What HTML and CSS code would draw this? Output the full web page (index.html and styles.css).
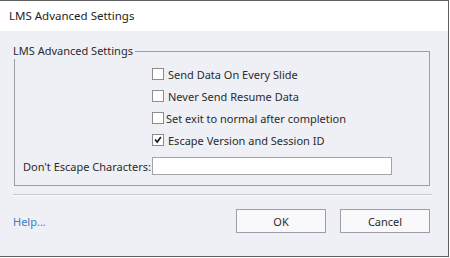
FILE: index.html
```html
<!DOCTYPE html>
<html lang="en">
<head>
  <meta charset="UTF-8">
  <title>LMS Advanced Settings</title>
  <link rel="stylesheet" href="styles.css">
</head>
<body>

  <div class="window">
    <!-- Title bar -->
    <div class="titlebar">LMS Advanced Settings</div>

    <div class="content">
      <fieldset class="group">
        <legend>LMS Advanced Settings</legend>

        <div class="options">
          <label class="option">
            <span class="check"></span>
            <span>Send Data On Every Slide</span>
          </label>
          <label class="option">
            <span class="check"></span>
            <span>Never Send Resume Data</span>
          </label>
          <label class="option tight">
            <span class="check"></span>
            <span>Set exit to normal after completion</span>
          </label>
          <label class="option">
            <span class="check checked">
              <svg width="12" height="12" viewBox="0 0 12 12"><path d="M2.5 5.5 L5 8.5 L9.5 2.5" fill="none" stroke="#1a1a1a" stroke-width="2"/></svg>
            </span>
            <span>Escape Version and Session ID</span>
          </label>
        </div>

        <div class="field-row">
          <span class="field-label">Don't Escape Characters:</span>
          <input type="text" class="field-input">
        </div>
      </fieldset>

      <div class="separator"></div>

      <!-- Footer -->
      <div class="footer">
        <a href="javascript:void(0)" class="help">Help...</a>
        <div class="buttons">
          <button class="btn">OK</button>
          <button class="btn">Cancel</button>
        </div>
      </div>
    </div>
  </div>

</body>
</html>
```

FILE: styles.css
```css
/* General Styles */
body {
  margin: 0;
  padding: 0;
  background: #ffffff;
  font-family: 'Noto Sans', 'DejaVu Sans', sans-serif;
  font-size: 11px;
  color: #2b2b2b;
}

/* Window frame */
.window {
  width: 449px;
  height: 257px;
  box-sizing: border-box;
  border-top: 1px solid #5f5f5f;
  border-right: 1px solid #5f5f5f;
  border-bottom: 1px solid #5f5f5f;
  background: #eff0f5;
  display: flex;
  flex-direction: column;
}

.titlebar {
  height: 30px;
  line-height: 30px;
  padding-left: 9px;
  background: #ffffff;
  font-size: 11.5px;
  color: #1e1e1e;
}

.content {
  padding: 12px 0 0 13px;
}

/* Group box */
.group {
  margin: 0 0 0 1px;
  padding: 4px 0 0 0;
  width: 416px;
  height: 143px;
  box-sizing: border-box;
  border: 1px solid #9c9ca4;
  min-width: 0;
}

.group legend {
  margin-left: -2px;
  padding: 0 2px 0 0;
  line-height: 16px;
  color: #2b2b2b;
}

.options {
  display: flex;
  flex-direction: column;
  padding-left: 137px;
}

.option {
  height: 22px;
  display: flex;
  align-items: center;
  gap: 4px;
}

.option.tight {
  gap: 2px;
}

.check {
  width: 12px;
  height: 12px;
  box-sizing: border-box;
  border: 1px solid #8c8c8c;
  background: #ffffff;
  display: flex;
  align-items: center;
  justify-content: center;
}

.check svg {
  display: block;
}

.field-row {
  display: grid;
  grid-template-columns: 137px 240px;
  align-items: center;
  height: 22px;
  margin-top: 4px;
}

.field-label {
  padding-left: 8px;
  white-space: nowrap;
}

.field-input {
  width: 240px;
  height: 18px;
  box-sizing: border-box;
  border: 1px solid #a2a2a8;
  background: #ffffff;
  margin: 0;
  padding: 0 3px;
  font: inherit;
}

.separator {
  width: 419px;
  margin-top: 8px;
  border-top: 1px solid #c6c6cc;
  border-bottom: 1px solid #fafafc;
}

/* Footer */
.footer {
  width: 417px;
  margin-top: 13px;
  display: flex;
  align-items: center;
  justify-content: space-between;
}

.help {
  color: #3c7dc3;
  text-decoration: none;
}

.buttons {
  display: flex;
  gap: 14px;
}

.btn {
  width: 90px;
  height: 24px;
  box-sizing: border-box;
  border: 1px solid #9e9ea6;
  background: #f9f9fb;
  font: inherit;
  color: #2b2b2b;
  padding: 0;
}
```
